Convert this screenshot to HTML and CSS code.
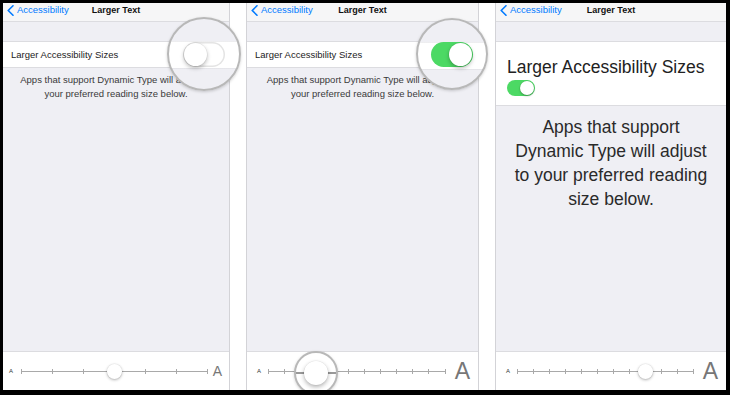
FILE: index.html
```html
<!DOCTYPE html>
<html>

<head>
	<meta charset="utf-8">
	<title>Larger Text</title>
	<meta name="viewport" content="width=device-width, initial-scale=1">
	<link rel="stylesheet" href="styles.css">
</head>

<body>
	<div class='frame'>
		<!-- step 1: switch off -->
		<section class='phone phone--one'>
			<header class='nav'>
				<a class='nav__back'>
					<svg class='nav__chevron' viewBox='0 0 7 11'><polyline points='6,0.8 1.2,5.5 6,10.2' /></svg>
					Accessibility
				</a>
				<h1 class='nav__title'>Larger Text</h1>
				<span></span>
			</header>
			<div class='row'>
				<span class='row__label'>Larger Accessibility Sizes</span>
			</div>
			<p class='note'>Apps that support Dynamic Type will adjust to your preferred reading size below.</p>
			<div class='slider'>
				<span class='slider__min'>A</span>
				<div class='track'>
					<span></span><span></span><span></span><span></span><span></span><span></span><span></span>
					<span class='thumb' style='left: 50%'></span>
				</div>
				<span class='slider__max'>A</span>
			</div>
			<div class='loupe loupe--one'>
				<span class='switch switch--big'></span>
			</div>
		</section>

		<!-- step 2: switch on -->
		<section class='phone phone--two'>
			<header class='nav'>
				<a class='nav__back'>
					<svg class='nav__chevron' viewBox='0 0 7 11'><polyline points='6,0.8 1.2,5.5 6,10.2' /></svg>
					Accessibility
				</a>
				<h1 class='nav__title'>Larger Text</h1>
				<span></span>
			</header>
			<div class='row'>
				<span class='row__label'>Larger Accessibility Sizes</span>
			</div>
			<p class='note'>Apps that support Dynamic Type will adjust to your preferred reading size below.</p>
			<div class='slider slider--wide'>
				<span class='slider__min'>A</span>
				<div class='track'>
					<span></span><span></span><span></span><span></span><span></span><span></span>
					<span></span><span></span><span></span><span></span><span></span><span></span>
				</div>
				<span class='slider__max'>A</span>
			</div>
			<div class='loupe loupe--two'>
				<span class='switch switch--big is-on'></span>
			</div>
			<div class='loupe loupe--thumb'>
				<span class='thumb thumb--big'></span>
			</div>
		</section>

		<!-- step 3: larger sizes -->
		<section class='phone phone--three'>
			<header class='nav'>
				<a class='nav__back'>
					<svg class='nav__chevron' viewBox='0 0 7 11'><polyline points='6,0.8 1.2,5.5 6,10.2' /></svg>
					Accessibility
				</a>
				<h1 class='nav__title'>Larger Text</h1>
				<span></span>
			</header>
			<div class='row row--large'>
				<span class='row__label'>Larger Accessibility Sizes</span>
				<span class='switch is-on'></span>
			</div>
			<p class='note note--large'>Apps that support Dynamic Type will adjust to your preferred reading size below.</p>
			<div class='slider slider--wide'>
				<span class='slider__min'>A</span>
				<div class='track'>
					<span></span><span></span><span></span><span></span><span></span><span></span>
					<span></span><span></span><span></span><span></span><span></span><span></span>
					<span class='thumb' style='left: 72.73%'></span>
				</div>
				<span class='slider__max'>A</span>
			</div>
		</section>
	</div>
</body>

</html>
```

FILE: styles.css
```css
/* page */

* {
	box-sizing: border-box;
}

html,
body {
	margin: 0;
	padding: 0;
	background: #000;
	font-family: 'Liberation Sans', Arial, sans-serif;
	color: #333;
}

body {
	width: 730px;
	height: 395px;
	overflow: hidden;
}

p,
h1 {
	margin: 0;
	font-weight: normal;
}

.frame {
	position: relative;
	width: 723px;
	height: 387px;
	margin: 3px 4px 5px 3px;
	display: flex;
	gap: 16px;
	background: #fff;
	overflow: hidden;
}

/* phone screen */

.phone {
	position: relative;
	display: flex;
	flex-direction: column;
	background: #efeff4;
}

.phone--one {
	width: 227px;
	border-right: 1px solid #d3d3d7;
}

.phone--two {
	width: 233px;
	border-left: 1px solid #d3d3d7;
	border-right: 1px solid #d3d3d7;
}

.phone--three {
	width: 231px;
	border-left: 1px solid #d3d3d7;
}

/* nav bar */

.nav {
	height: 19px;
	display: grid;
	grid-template-columns: 1fr auto 1fr;
	background: #f6f6f7;
	border-bottom: 1px solid #dcdce0;
	font-size: 9.5px;
	line-height: 14px;
}

.nav__back {
	display: flex;
	align-items: center;
	height: 14px;
	color: #007aff;
}

.nav__chevron {
	width: 7px;
	height: 11px;
	margin: 0 3px 0 4px;
	fill: none;
	stroke: #007aff;
	stroke-width: 1.6;
	stroke-linecap: round;
	stroke-linejoin: round;
}

.nav__title {
	font-size: 9px;
	line-height: 14px;
	font-weight: bold;
	color: #111;
}

/* settings row */

.row {
	margin-top: 19px;
	height: 27px;
	display: flex;
	align-items: center;
	padding: 0 8px;
	background: #fff;
	border-top: 1px solid #dcdce0;
	border-bottom: 1px solid #dcdce0;
	font-size: 9.5px;
	color: #222;
}

.row--large {
	height: 65px;
	flex-direction: column;
	align-items: flex-start;
	padding: 14px 11px 0;
	font-size: 17.5px;
	line-height: 22px;
}

.row--large .switch {
	margin-top: 2px;
}

.note {
	padding: 5px 11px 0;
	text-align: center;
	font-size: 9.5px;
	line-height: 14px;
	color: #3a3a3a;
}

.note--large {
	padding: 9px 12px 0;
	font-size: 17.5px;
	line-height: 24px;
	color: #2a2a2a;
}

/* switch */

.switch {
	position: relative;
	display: block;
	width: 28px;
	height: 16px;
	border-radius: 8px;
	background: #fff;
	box-shadow: inset 0 0 0 1px #e2e2e2;
}

.switch::after {
	content: '';
	position: absolute;
	top: 1px;
	left: 1px;
	width: 14px;
	height: 14px;
	border-radius: 50%;
	background: #fff;
	box-shadow: 0 1px 2px rgba(0, 0, 0, 0.3), 0 0 0 0.5px rgba(0, 0, 0, 0.08);
}

.switch.is-on {
	background: #4cd964;
	box-shadow: none;
}

.switch.is-on::after {
	left: 13px;
}

.switch--big {
	width: 42px;
	height: 25px;
	border-radius: 13px;
	box-shadow: inset 0 0 0 1.5px #e4e4e4;
}

.switch--big::after {
	top: 1px;
	left: 1px;
	width: 23px;
	height: 23px;
	box-shadow: 0 2px 4px rgba(0, 0, 0, 0.28), 0 0 0 0.5px rgba(0, 0, 0, 0.08);
}

.switch--big.is-on::after {
	left: 18px;
}

/* text size slider */

.slider {
	margin-top: auto;
	height: 39px;
	display: flex;
	align-items: center;
	padding: 0 7px 0 6px;
	background: #fff;
	border-top: 1px solid #dcdce0;
}

.slider__min {
	font-size: 6px;
	color: #333;
}

.slider__max {
	font-size: 14px;
	color: #777;
}

.slider--wide {
	padding: 0 8px 0 10px;
}

.slider--wide .slider__max {
	font-size: 23px;
}

.track {
	position: relative;
	flex: 1;
	height: 5px;
	margin: 0 5px 0 8px;
	display: flex;
	justify-content: space-between;
	background: linear-gradient(#a9a9a9, #a9a9a9) center / 100% 1px no-repeat;
}

.slider--wide .track {
	margin: 0 9px 0 7px;
}

.track span {
	width: 1px;
	height: 5px;
	background: #a9a9a9;
}

.track .thumb {
	position: absolute;
	top: 50%;
	width: 15px;
	height: 15px;
	margin: -7.5px 0 0 -7.5px;
	border-radius: 50%;
	background: #fff;
	box-shadow: 0 1px 3px rgba(0, 0, 0, 0.3), 0 0 0 0.5px rgba(0, 0, 0, 0.06);
}

/* magnifier loupes */

.loupe {
	position: absolute;
	display: flex;
	align-items: center;
	justify-content: center;
	border-radius: 50%;
	border: 2px solid #b8b8b8;
	box-shadow: 0 1px 3px rgba(0, 0, 0, 0.18);
	background: linear-gradient(#efeff4 0, #efeff4 22px, #dcdce0 22px, #fff 23px, #fff 49px, #dcdce0 49px, #efeff4 50px);
}

.loupe--one {
	left: 164px;
	top: 14px;
	width: 74px;
	height: 74px;
}

.loupe--two {
	left: 169px;
	top: 15px;
	width: 72px;
	height: 72px;
}

.loupe--thumb {
	left: 47px;
	top: 348px;
	width: 44px;
	height: 44px;
	background: linear-gradient(#999, #999) center / 100% 2px no-repeat, #fff;
}

.thumb--big {
	width: 24px;
	height: 24px;
	border-radius: 50%;
	background: #fff;
	box-shadow: 0 2px 4px rgba(0, 0, 0, 0.3), 0 0 0 0.5px rgba(0, 0, 0, 0.06);
}
```
